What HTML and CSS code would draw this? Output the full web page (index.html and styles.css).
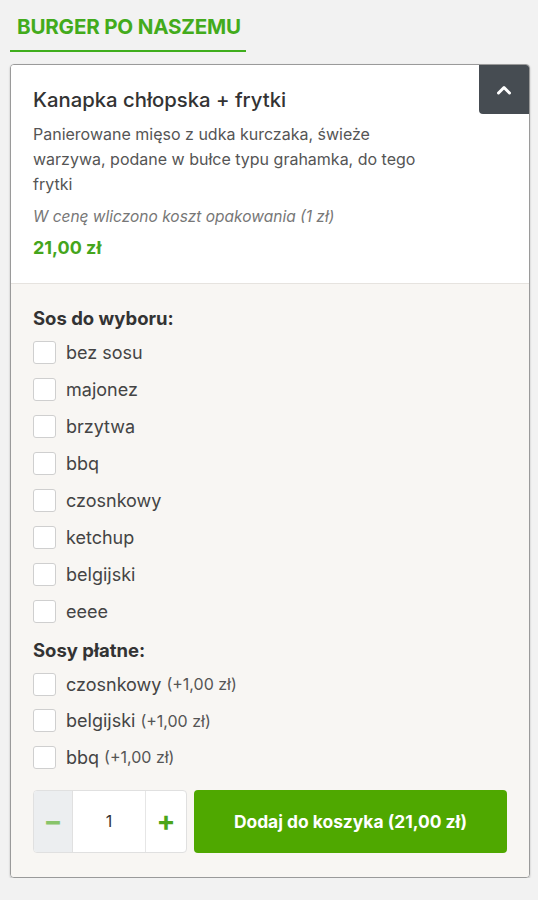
FILE: index.html
```html
<!DOCTYPE html>
<html lang="pl">
<head>
<meta charset="utf-8">
<link rel="stylesheet" href="styles.css">
</head>
<body>
<div class="page">
  <div class="cat"><h2 class="cat-title">BURGER PO NASZEMU</h2></div>
  <div class="card">
    <div class="card-top">
      <button class="toggle" aria-label="zwiń">
        <svg width="16" height="12" viewBox="0 0 16 12"><path d="M2.5 9 L8 3.5 L13.5 9" fill="none" stroke="#fff" stroke-width="3" stroke-linecap="round" stroke-linejoin="round"/></svg>
      </button>
      <h3 class="title">Kanapka chłopska + frytki</h3>
      <p class="desc">Panierowane mięso z udka kurczaka, świeże warzywa, podane w bułce typu grahamka, do tego frytki</p>
      <p class="note">W cenę wliczono koszt opakowania (1 zł)</p>
      <p class="price">21,00 zł</p>
    </div>
    <div class="card-bottom">
      <div class="group">
        <div class="group-title">Sos do wyboru:</div>
        <label class="opt"><span class="box"></span>bez sosu</label>
        <label class="opt"><span class="box"></span>majonez</label>
        <label class="opt"><span class="box"></span>brzytwa</label>
        <label class="opt"><span class="box"></span>bbq</label>
        <label class="opt"><span class="box"></span>czosnkowy</label>
        <label class="opt"><span class="box"></span>ketchup</label>
        <label class="opt"><span class="box"></span>belgijski</label>
        <label class="opt"><span class="box"></span>eeee</label>
      </div>
      <div class="group paid">
        <div class="group-title">Sosy płatne:</div>
        <label class="opt"><span class="box"></span>czosnkowy <span class="extra">(+1,00 zł)</span></label>
        <label class="opt"><span class="box"></span>belgijski <span class="extra">(+1,00 zł)</span></label>
        <label class="opt"><span class="box"></span>bbq <span class="extra">(+1,00 zł)</span></label>
      </div>
      <div class="actions">
        <div class="qty">
          <span class="qbtn minus">&minus;</span>
          <span class="qval">1</span>
          <span class="qbtn plus">+</span>
        </div>
        <button class="add">Dodaj do koszyka (21,00 zł)</button>
      </div>
    </div>
  </div>
</div>
</body>
</html>
```
FILE: styles.css
```css
* { box-sizing: border-box; }
html, body { margin: 0; padding: 0; }
body {
  background: #f2f2f2;
  font-family: Inter, "Noto Sans", sans-serif;
  color: #333;
}
.page { padding: 14px 8px 0 10px; }
.cat { display: inline-block; border-bottom: 2px solid #3fae1d; padding: 0 5px 10px 7px; }
.cat-title {
  margin: 0;
  font-size: 20.6px;
  font-weight: 700;
  color: #43ab1c;
  letter-spacing: -0.2px;
  line-height: 26px;
}
.card {
  margin-top: 12px;
  border: 1px solid #9a9a9a;
  border-radius: 4px;
  overflow: hidden;
  box-shadow: 0 1px 2px rgba(0,0,0,0.25);
}
.card-top {
  position: relative;
  background: #fff;
  padding: 21px 22px 24px 22px;
  border-bottom: 1px solid #e6e3df;
}
.toggle {
  position: absolute;
  top: 0; right: 0;
  width: 50px; height: 49px;
  border: none;
  background: #464c52;
  border-bottom-left-radius: 4px;
  display: flex; align-items: center; justify-content: center;
  padding: 0;
}
.title { margin: 0; font-size: 20.3px; font-weight: 500; color: #333; line-height: 28px; }
.desc { margin: 8px 0 0; font-size: 16px; line-height: 25px; color: #555; width: 400px; }
.note { margin: 9px 0 0; font-size: 15.5px; font-style: italic; color: #777; line-height: 22px; }
.price { margin: 9px 0 0; font-size: 18px; font-weight: 700; color: #45a51c; line-height: 22px; }
.card-bottom { background: #f8f6f3; padding: 23px 22px 24px 22px; }
.group-title { font-size: 18.5px; font-weight: 700; color: #333; line-height: 22px; margin-bottom: 5px; }
.opt { display: flex; align-items: center; height: 37px; font-size: 18px; color: #444; }
.box {
  width: 23px; height: 23px;
  background: #fff;
  border: 1px solid #cfcfcf;
  border-radius: 3px;
  margin-right: 10px;
  flex: none;
}
.extra { font-size: 16px; color: #555; margin-left: 5px; }
.paid { margin-top: 9px; }
.paid .opt { height: 36.5px; }
.actions { display: flex; gap: 7px; margin-top: 14px; }
.qty {
  display: flex;
  width: 154px; height: 63px;
  border: 1px solid #e0e0e0;
  border-radius: 4px;
  overflow: hidden;
  background: #fff;
}
.qbtn { display: flex; align-items: center; justify-content: center; font-size: 28px; font-weight: 700; color: #4aa51a; }
.minus { width: 39px; background: #eceef0; color: #88c46a; border-right: 1px solid #e0e0e0; }
.qval { width: 73px; display: flex; align-items: center; justify-content: center; font-size: 16px; color: #333; border-right: 1px solid #e6e6e6; }
.plus { flex: 1; }
.add {
  flex: 1;
  height: 63px;
  border: none;
  border-radius: 4px;
  background: #4fa800;
  color: #fff;
  font-family: inherit;
  font-size: 17.4px;
  font-weight: 700;
}
```
